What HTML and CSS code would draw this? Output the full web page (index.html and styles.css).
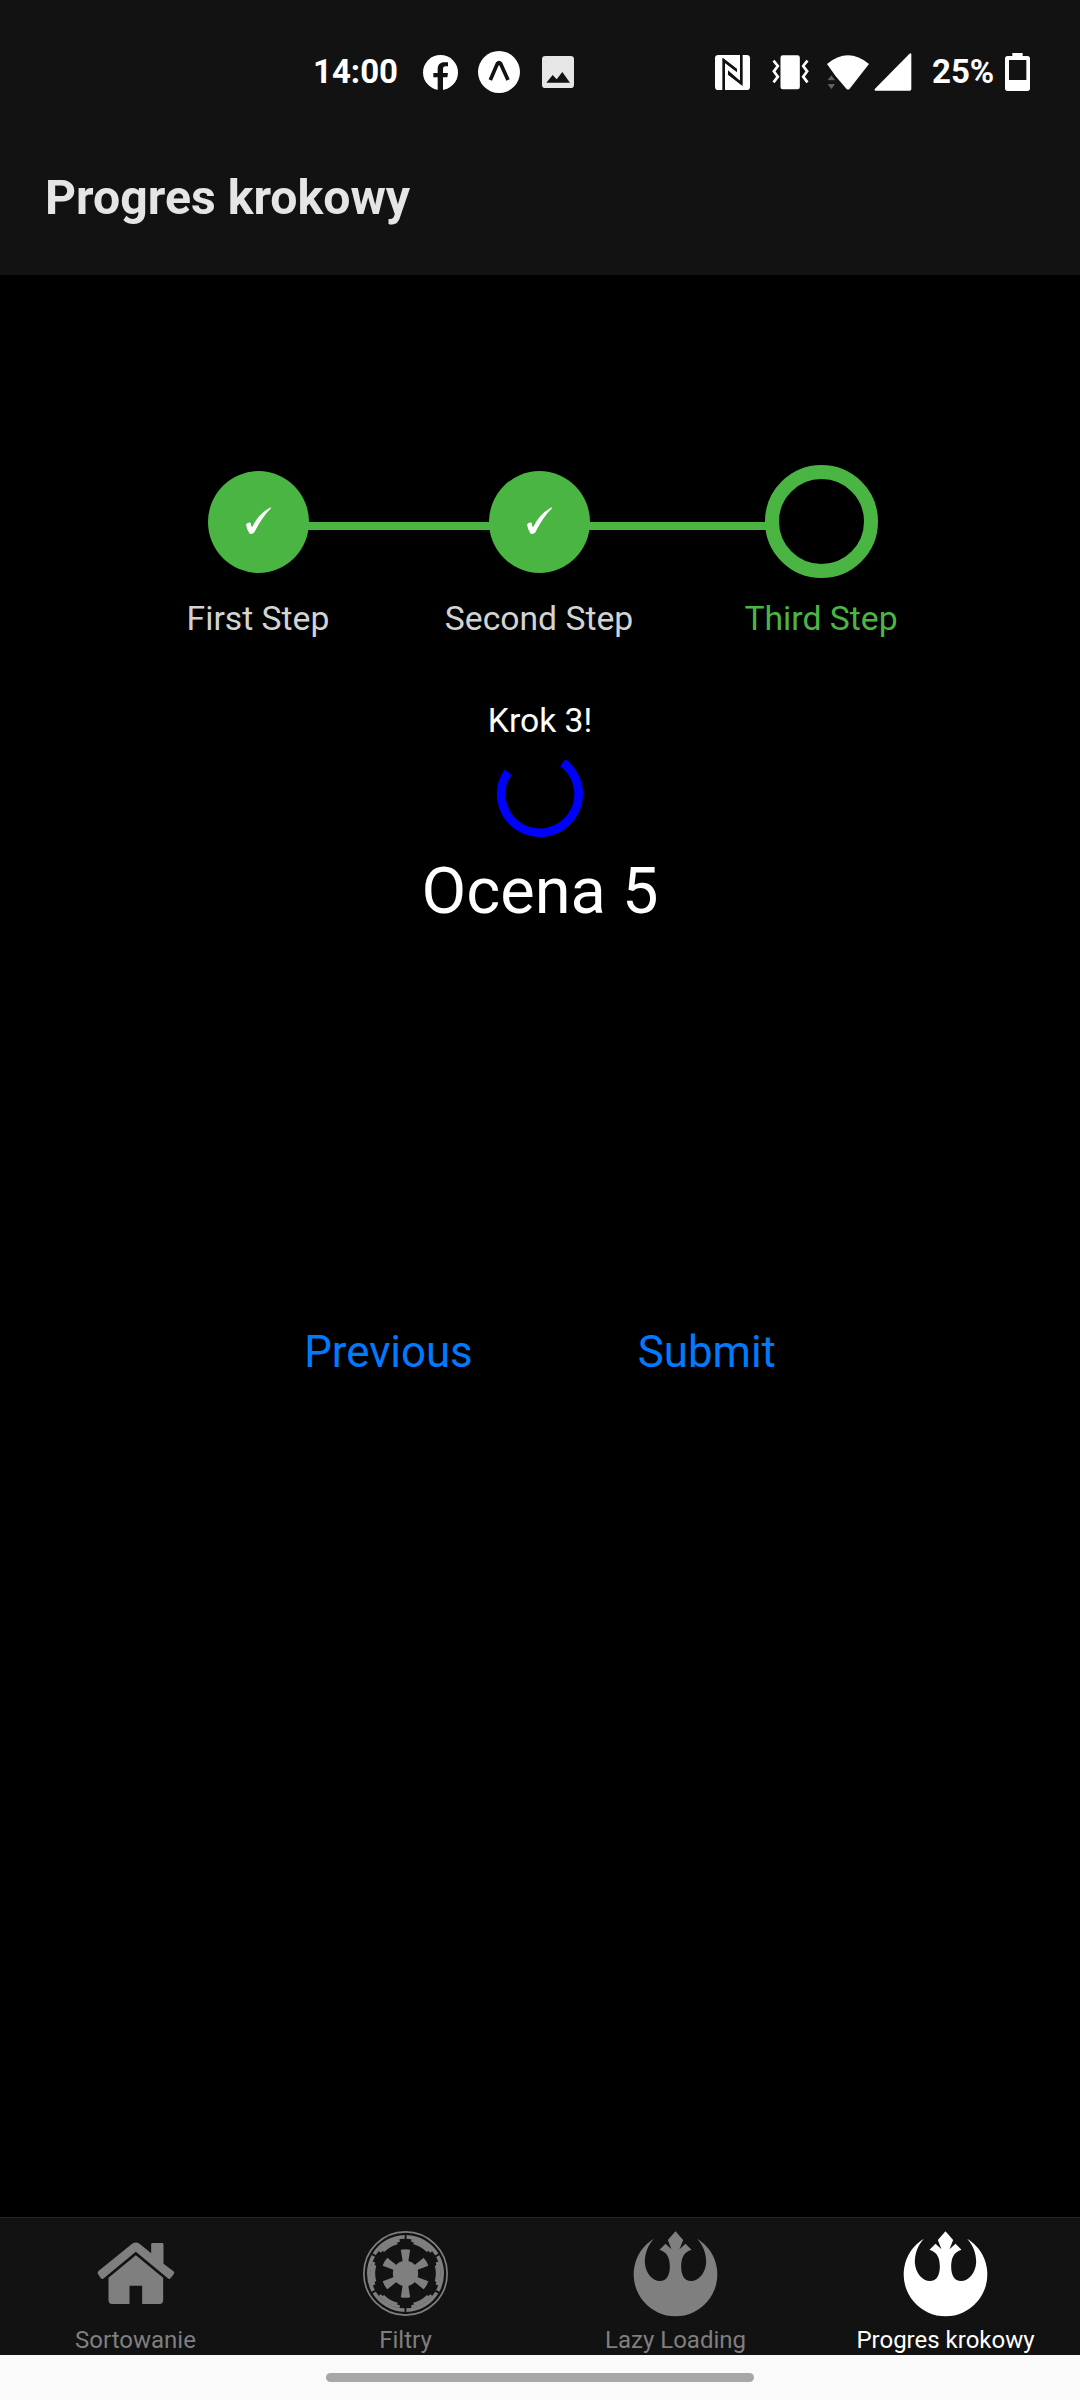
FILE: index.html
```html
<!DOCTYPE html>
<html lang="pl">
<head>
<meta charset="utf-8">
<title>Progres krokowy</title>
<link rel="stylesheet" href="styles.css">
</head>
<body>
<div class="screen">
  <div class="status">
    <div class="status-left">
      <span class="clock">14:00</span>
      <svg class="ic-fb" viewBox="0 0 105 105"><circle cx="52.500" cy="52.500" r="52.500" fill="#fff"/><path d="M44 106V67H31V54H44V43C44 28 52 22 64 22H75V34H68C62 34 60 37 60 43V54H75L73 67H60V106Z" fill="#121212"/></svg>
      <svg class="ic-expo" viewBox="0 0 126 126"><circle cx="63" cy="63" r="63" fill="#fff"/><path d="M37 87L58 38Q63 32 68 38L90 87" fill="none" stroke="#121212" stroke-width="11"/><path d="M54 33H72L69 43H57Z" fill="#121212"/></svg>
      <svg class="ic-image" viewBox="0 0 96 96"><rect width="96" height="96" rx="10" fill="#e6e6e6"/><path d="M13 80L32 57L44 70L61 48L84 80Z" fill="#121212"/></svg>
    </div>
    <div class="status-right">
      <svg class="ic-nfc" viewBox="0 0 105 105"><rect width="105" height="105" rx="10" fill="#fff"/><g fill="none" stroke="#121212" stroke-width="7"><path d="M26 106V16L63 44M79 -1V85L40 56"/></g><path d="M23 8L66 42V52L30 24V106H23ZM82 -1V92L39 58V46L75 77V-1Z" fill="#121212"/></svg>
      <svg class="ic-vib" viewBox="0 0 110 105"><rect x="25" y="1" width="58" height="102" rx="7" fill="#fff"/><path d="M4 17L17 33L5 49L17 65L4 82M106 17L93 33L105 49L93 65L106 82" fill="none" stroke="#fff" stroke-width="8"/></svg>
      <svg class="ic-wifi" viewBox="0 0 126 105"><path d="M0 27Q63 -25 126 27L68 101Q63 106 58 101L25 62Z" fill="#fff"/><path d="M1 76L13 61L25 76ZM1 87H25L13 103Z" fill="#666" stroke="#121212" stroke-width="1"/></svg>
      <svg class="ic-signal" viewBox="0 0 114 114"><path d="M112 3V108Q112 113 107 113H4Q-1 112 3 107L105 4Q111 -2 112 3Z" fill="#fff"/></svg>
      <span class="percent">25%</span>
      <svg class="ic-batt" viewBox="0 0 75 114"><path fill-rule="evenodd" d="M22 0H53V9H67Q75 9 75 17V106Q75 114 67 114H8Q0 114 0 106V17Q0 9 8 9H22ZM12 21V81H64V21Z" fill="#fff"/></svg>
    </div>
  </div>
  <header class="header"><h1>Progres krokowy</h1></header>

  <main class="content">
    <div class="steps">
      <div class="step">
        <div class="marker"><div class="dot"><svg class="check" viewBox="0 0 76 84"><path d="M0 52Q7 44 14 47Q16 57 18 62Q38 19 76 0V3Q49 29 25 77Q19 83 11 81Q2 69 0 52Z" fill="#fff"/></svg></div></div>
        <span class="label">First Step</span>
      </div>
      <div class="line"></div>
      <div class="step">
        <div class="marker"><div class="dot"><svg class="check" viewBox="0 0 76 84"><path d="M0 52Q7 44 14 47Q16 57 18 62Q38 19 76 0V3Q49 29 25 77Q19 83 11 81Q2 69 0 52Z" fill="#fff"/></svg></div></div>
        <span class="label">Second Step</span>
      </div>
      <div class="line line-last"></div>
      <div class="step">
        <div class="marker"><div class="ring"></div></div>
        <span class="label active">Third Step</span>
      </div>
    </div>
    <p class="hint">Krok 3!</p>
    <svg class="spinner" viewBox="-43 -43 86 86"><path d="M22.800 -31.200A38.700 38.700 0 1 1 -32 -21.800" fill="none" stroke="#00f" stroke-width="8.600"/></svg>
    <p class="rating">Ocena 5</p>
    <div class="actions"><a class="btn">Previous</a><a class="btn">Submit</a></div>
  </main>

  <nav class="tabs">
    <div class="tab">
      <svg class="tab-icon" viewBox="157.500 93 255 255" fill="currentColor"><path d="M172 221Q170 217 174 213L275 131Q286 124 297 131L332 160V133Q332 129 337 129H364Q369 129 369 133V191L399 214Q403 218 400 222L390 235Q386 239 382 235L286 155L190 235Q186 239 181 235Z"/><path d="M286 166L368 233V301Q368 312 357 312H305V257H267V312H215Q204 312 204 301V233Z"/></svg>
      <span>Sortowanie</span>
    </div>
    <div class="tab">
      <svg class="tab-icon" viewBox="-127.500 -127.500 255 255" fill="none" stroke="currentColor">
        <circle r="125" stroke-width="5"/>
        <circle r="110" stroke-width="11" pathLength="360" stroke-dasharray="57 3" stroke-dashoffset="28.500"/>
        <circle r="101" stroke-width="9" pathLength="360" stroke-dasharray="40 20" stroke-dashoffset="20"/>
        <circle r="94.500" stroke-width="7" pathLength="360" stroke-dasharray="30 30" stroke-dashoffset="15"/>
        <g fill="currentColor" stroke="none"><circle r="38"/>
          <path id="spoke" d="M-14 -71Q0 -74 14 -71L8 -33H-8Z"/>
          <use href="#spoke" transform="rotate(60)"/><use href="#spoke" transform="rotate(120)"/><use href="#spoke" transform="rotate(180)"/><use href="#spoke" transform="rotate(240)"/><use href="#spoke" transform="rotate(300)"/></g>
      </svg>
      <span>Filtry</span>
    </div>
    <div class="tab">
      <svg class="tab-icon" viewBox="-127.500 93 255 255" fill="currentColor"><path id="phoenix" d="M-65 116C-84 138 -92 160 -92 188C-90 220 -68 243 -47 243C-26 243 -17 224 -17 200C-17 178 -22 157 -48 149L-30 131L-12 148L-23 120L0 94L23 120L12 148L30 131L48 149C22 157 17 178 17 200C17 224 26 243 47 243C68 243 90 220 92 188C92 160 84 138 65 116A125.500 125.500 0 1 1 -65 116Z"/></svg>
      <span>Lazy Loading</span>
    </div>
    <div class="tab selected">
      <svg class="tab-icon" viewBox="-127.500 93 255 255" fill="currentColor"><use href="#phoenix"/></svg>
      <span>Progres krokowy</span>
    </div>
  </nav>
  <div class="gesture"><div class="handle"></div></div>
</div>
</body>
</html>
```
FILE: styles.css
```css
* { box-sizing: border-box; }
body { margin: 0; background: #000; font-family: Roboto, sans-serif; }
svg { display: block; flex: none; overflow: visible; }
h1, p { margin: 0; }
.screen { width: 1080px; height: 2400px; display: flex; flex-direction: column; background: #000; }

.status { height: 145px; background: #121212; display: flex; justify-content: space-between; padding: 0 50px 0 313px; color: #fff; font-size: 33px; font-weight: 700; line-height: 40px; }
.status-left, .status-right { display: flex; align-items: center; height: 144px; }
.clock { width: 110px; }
.ic-fb { width: 35px; height: 35px; }
.ic-expo { width: 42px; height: 42px; margin-left: 20px; }
.ic-image { width: 32px; height: 32px; margin-left: 22px; }
.ic-nfc { width: 35px; height: 35px; margin-right: 22px; }
.ic-vib { width: 37px; height: 35px; margin-right: 18px; }
.ic-wifi { width: 42px; height: 35px; margin-right: 5px; }
.ic-signal { width: 38px; height: 38px; margin-right: 20px; }
.percent { width: 73px; }
.ic-batt { width: 25px; height: 38px; }

.header { height: 130px; background: #121212; padding: 25px 45px 0; }
.header h1 { font-size: 48.200px; line-height: 56px; font-weight: 700; color: #e5e5e5; }

.content { flex: 1; display: flex; flex-direction: column; align-items: center; padding-top: 190px; }
.steps { display: flex; align-items: flex-start; justify-content: center; margin-right: 1px; height: 175px; }
.step { width: 101px; display: flex; flex-direction: column; align-items: center; }
.marker { height: 113px; display: flex; align-items: center; }
.dot { width: 101px; height: 102px; border-radius: 50%; background: #4bb543; display: flex; align-items: center; justify-content: center; padding-bottom: 2px; }
.check { width: 25px; height: 28px; }
.ring { width: 113px; height: 113px; border: 14px solid #4bb543; border-radius: 50%; }
.line { width: 182px; height: 8px; margin: 57px -1px 0; background: #4bb543; }
.line-last { width: 178px; margin-right: 4px; }
.label { margin-top: 21px; font-size: 33.700px; line-height: 40px; color: #d3d3d3; white-space: nowrap; }
.active { color: #4bb543; }
.hint { margin-top: 61px; font-size: 33.700px; line-height: 40px; color: #fff; }
.spinner { width: 86px; height: 86px; margin-top: 10px; }
.rating { margin-top: 15px; font-size: 65px; line-height: 78px; color: #fff; }
.actions { display: flex; gap: 165px; margin-top: 396px; }
.btn { font-size: 43.800px; line-height: 52px; color: #007aff; }

.tabs { height: 138px; display: grid; grid-template-columns: repeat(4, 1fr); background: #121212; border-top: 1px solid #272729; color: #7f7f7f; }
.tab { display: flex; flex-direction: column; align-items: center; padding-top: 13px; font-size: 24px; line-height: 28px; }
.tab span { margin-top: 10px; margin-left: 1px; white-space: nowrap; }
.tab-icon { width: 85px; height: 85px; }
.selected { color: #fff; }
.gesture { height: 45px; background: #fafafa; padding-top: 18px; }
.handle { width: 428px; height: 9px; margin: 0 auto; border-radius: 5px; background: #a7a7a7; }
```
